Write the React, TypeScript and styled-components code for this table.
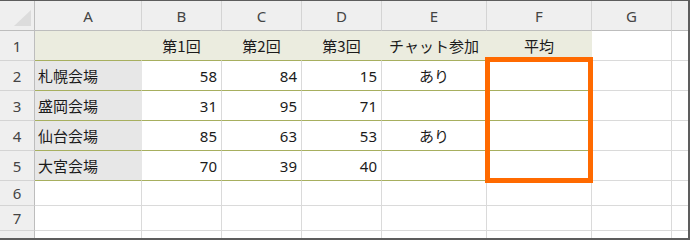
import * as React from 'react';
import styled, { createGlobalStyle } from 'styled-components';

const GlobalStyle = createGlobalStyle`
  html, body {
    margin: 0;
    padding: 0;
    background: #fff;
  }
  body {
    font-family: 'Noto Sans', 'Noto Sans CJK JP', sans-serif;
  }
`;

const OLIVE = '#a7af5f';
const GRID = '#dadada';
const HEAD_BG = '#efefef';

const columns = ['A', 'B', 'C', 'D', 'E', 'F', 'G', 'H'];

type Row = {
  venue: string;
  scores: number[];
  chat: string;
};

const rows: Row[] = [
  { venue: '札幌会場', scores: [58, 84, 15], chat: 'あり' },
  { venue: '盛岡会場', scores: [31, 95, 71], chat: '' },
  { venue: '仙台会場', scores: [85, 63, 53], chat: 'あり' },
  { venue: '大宮会場', scores: [70, 39, 40], chat: '' },
];

const titles = ['第1回', '第2回', '第3回', 'チャット参加', '平均'];

const App: React.FC = () => (
  <>
    <GlobalStyle />
    <Frame>
      <Sheet>
        <Corner>
          <SelectAll />
        </Corner>
        {columns.map((c) => (
          <ColHead key={c}>{c}</ColHead>
        ))}

        <RowHead>1</RowHead>
        <TitleCell />
        {titles.map((t) => (
          <TitleCell key={t} $align="center">
            {t}
          </TitleCell>
        ))}
        <Cell />
        <Cell />

        {rows.map((r, i) => (
          <React.Fragment key={r.venue}>
            <RowHead>{i + 2}</RowHead>
            <VenueCell>{r.venue}</VenueCell>
            {r.scores.map((s, j) => (
              <DataCell key={j} $align="right">
                {s}
              </DataCell>
            ))}
            <DataCell $align="center">{r.chat}</DataCell>
            <DataCell />
            <Cell />
            <Cell />
          </React.Fragment>
        ))}

        {[6, 7, 8].map((n) => (
          <React.Fragment key={n}>
            <RowHead>{n}</RowHead>
            {columns.map((c) => (
              <Cell key={c} />
            ))}
          </React.Fragment>
        ))}

        <Selection />
      </Sheet>
    </Frame>
  </>
);

const Frame = styled.div`
  width: 690px;
  height: 240px;
  box-sizing: border-box;
  border-top: 1px solid #5d5d5d;
  border-right: 2px solid #5d5d5d;
  border-bottom: 2px solid #5d5d5d;
  overflow: hidden;
`;

const Sheet = styled.div`
  position: relative;
  display: grid;
  grid-template-columns: 35px 107px 80px 80px 80px 105px 105px 80px 80px;
  grid-template-rows: 30px repeat(5, 30px) repeat(3, 25px);
  font-size: 15px;
  color: #1b1b1b;
`;

const Box = styled.div<{ $align?: 'left' | 'center' | 'right' }>`
  box-sizing: border-box;
  display: flex;
  align-items: center;
  justify-content: ${({ $align }) =>
    $align === 'right' ? 'flex-end' : $align === 'center' ? 'center' : 'flex-start'};
  padding: 0 4px;
  white-space: nowrap;
  overflow: hidden;
`;

const Corner = styled(Box)`
  position: relative;
  background: ${HEAD_BG};
  border-right: 1px solid #bdbdbd;
  border-bottom: 1px solid #bdbdbd;
`;

const SelectAll = styled.div`
  position: absolute;
  right: 3px;
  bottom: 4px;
  width: 17px;
  height: 16px;
  background: #dcdcdc;
  clip-path: polygon(100% 0, 100% 100%, 0 100%);
`;

const ColHead = styled(Box)`
  justify-content: center;
  background: ${HEAD_BG};
  color: #444;
  border-right: 1px solid #d4d4d4;
  border-bottom: 1px solid #bdbdbd;
`;

const RowHead = styled(Box)`
  justify-content: center;
  background: ${HEAD_BG};
  color: #444;
  border-right: 1px solid #bdbdbd;
  border-bottom: 1px solid #d4d4d4;
`;

const Cell = styled(Box)`
  background: #fff;
  border-right: 1px solid ${GRID};
  border-bottom: 1px solid ${GRID};
`;

const TitleCell = styled(Box)`
  font-family: 'Noto Sans CJK JP', sans-serif;
  background: #ebecdf;
  border-right: 1px solid #ebecdf;
  border-bottom: 1px solid ${OLIVE};
`;

const VenueCell = styled(Box)`
  font-family: 'Noto Sans CJK JP', sans-serif;
  padding-left: 3px;
  background: #e7e7e7;
  border-right: 1px solid #e7e7e7;
  border-bottom: 1px solid ${OLIVE};
`;

const DataCell = styled(Box)`
  font-family: 'Noto Sans', 'Noto Sans CJK JP', sans-serif;
  background: #fff;
  border-right: 1px solid ${GRID};
  border-bottom: 1px solid ${OLIVE};
`;

// Thick outline drawn over F2:F5; absolute so it takes no grid slot
const Selection = styled.div`
  grid-column: 7 / 8;
  grid-row: 3 / 7;
  position: absolute;
  top: -4px;
  left: -2px;
  right: -1px;
  bottom: -2px;
  border: 5px solid #ff6a00;
  pointer-events: none;
`;

export default App;
